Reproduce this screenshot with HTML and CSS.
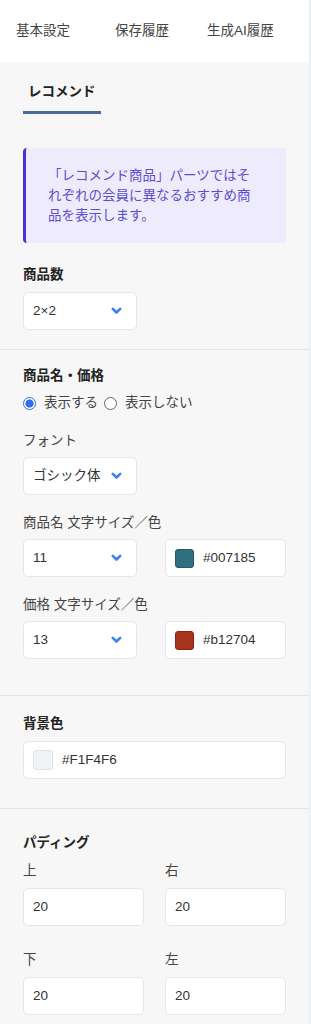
FILE: index.html
```html
<!DOCTYPE html>
<html>
<head>
    <title>レコメンド設定</title>
    <link rel="stylesheet" href="styles.css">
</head>
<body>
    <div class="panel">
        <div class="top-tabs">
            <span class="top-tab">基本設定</span>
            <span class="top-tab">保存履歴</span>
            <span class="top-tab">生成AI履歴</span>
        </div>

        <div class="sub-tabs">
            <span class="sub-tab active">レコメンド</span>
        </div>

        <div class="section section-first">
            <div class="info-box">「レコメンド商品」パーツではそれぞれの会員に異なるおすすめ商品を表示します。</div>

            <div class="field-label bold">商品数</div>
            <div class="select">
                <span>2×2</span>
                <svg class="chevron" width="11" height="8" viewBox="0 0 11 8"><path d="M1.8 1.8 L5.5 5.5 L9.2 1.8" fill="none" stroke="#3b82f6" stroke-width="2.6" stroke-linecap="round" stroke-linejoin="round"/></svg>
            </div>
        </div>

        <div class="section section-name">
            <div class="field-label bold">商品名・価格</div>
            <div class="radio-row">
                <label class="radio"><span class="radio-dot checked"></span>表示する</label>
                <label class="radio"><span class="radio-dot"></span>表示しない</label>
            </div>

            <div class="field-label spaced">フォント</div>
            <div class="select">
                <span>ゴシック体</span>
                <svg class="chevron" width="11" height="8" viewBox="0 0 11 8"><path d="M1.8 1.8 L5.5 5.5 L9.2 1.8" fill="none" stroke="#3b82f6" stroke-width="2.6" stroke-linecap="round" stroke-linejoin="round"/></svg>
            </div>

            <div class="field-label spaced">商品名 文字サイズ／色</div>
            <div class="size-color-row">
                <div class="select">
                    <span>11</span>
                    <svg class="chevron" width="11" height="8" viewBox="0 0 11 8"><path d="M1.8 1.8 L5.5 5.5 L9.2 1.8" fill="none" stroke="#3b82f6" stroke-width="2.6" stroke-linecap="round" stroke-linejoin="round"/></svg>
                </div>
                <div class="color-input">
                    <span class="swatch swatch-teal"></span>
                    <span>#007185</span>
                </div>
            </div>

            <div class="field-label spaced">価格 文字サイズ／色</div>
            <div class="size-color-row">
                <div class="select">
                    <span>13</span>
                    <svg class="chevron" width="11" height="8" viewBox="0 0 11 8"><path d="M1.8 1.8 L5.5 5.5 L9.2 1.8" fill="none" stroke="#3b82f6" stroke-width="2.6" stroke-linecap="round" stroke-linejoin="round"/></svg>
                </div>
                <div class="color-input">
                    <span class="swatch swatch-red"></span>
                    <span>#b12704</span>
                </div>
            </div>
        </div>

        <div class="section section-bg">
            <div class="field-label bold">背景色</div>
            <div class="color-input">
                <span class="swatch swatch-light"></span>
                <span>#F1F4F6</span>
            </div>
        </div>

        <div class="section section-padding">
            <div class="field-label bold">パディング</div>
            <div class="padding-grid">
                <div>
                    <div class="field-label small-gap">上</div>
                    <div class="text-input">20</div>
                </div>
                <div>
                    <div class="field-label small-gap">右</div>
                    <div class="text-input">20</div>
                </div>
                <div>
                    <div class="field-label small-gap">下</div>
                    <div class="text-input">20</div>
                </div>
                <div>
                    <div class="field-label small-gap">左</div>
                    <div class="text-input">20</div>
                </div>
            </div>
        </div>
    </div>
</body>
</html>
```

FILE: styles.css
```css
html {
    background: #eaf0fa;
}

body {
    margin: 0;
    font-family: "Liberation Sans", "Noto Sans CJK JP", sans-serif;
    font-size: 13.5px;
    line-height: 20px;
    color: #333;
}

.panel {
    width: 309px;
    background: #f7f7f7;
    padding-bottom: 40px;
}

.top-tabs {
    height: 62px;
    background: white;
    display: flex;
    align-items: center;
    padding-left: 16px;
}

.top-tab {
    color: #444;
    white-space: nowrap;
}

.top-tab:nth-child(1) {
    margin-right: 45px;
}

.top-tab:nth-child(2) {
    margin-right: 38px;
}

.sub-tabs {
    padding: 20px 23px 0;
    display: flex;
}

.sub-tab {
    font-weight: bold;
    color: #222;
    padding: 0 5px 9px;
    border-bottom: 3px solid #4b6a9b;
}

.section {
    padding: 0 23px;
    border-bottom: 1px solid #e4e4e4;
}

.section-first {
    padding-top: 34px;
    padding-bottom: 19px;
}

.section-name {
    padding-top: 16px;
    padding-bottom: 36px;
}

.section-bg {
    padding-top: 18px;
    padding-bottom: 29px;
}

.section-padding {
    padding-top: 24px;
    border-bottom: none;
}

.info-box {
    background: #eeebfc;
    border-left: 3px solid #4c2fd6;
    border-radius: 4px;
    color: #5b4fd0;
    padding: 18px 28px 17px 22px;
    margin-bottom: 22px;
}

.field-label {
    color: #444;
    margin-bottom: 7px;
}

.field-label.bold {
    font-weight: bold;
    color: #222;
}

.field-label.spaced {
    margin-top: 18px;
    margin-bottom: 6px;
}

.field-label.small-gap {
    margin-top: 1px;
    margin-bottom: 7px;
}

.select,
.color-input,
.text-input {
    box-sizing: border-box;
    height: 38px;
    background: white;
    border: 1px solid #e6e6e6;
    border-radius: 5px;
    display: flex;
    align-items: center;
    color: #333;
}

.select {
    width: 114px;
    padding: 0 14px 0 9px;
    justify-content: space-between;
}

.chevron {
    display: block;
}

.radio-row {
    display: flex;
    align-items: center;
    gap: 6px;
}

.radio {
    display: flex;
    align-items: center;
    gap: 8px;
    color: #444;
}

.radio-dot {
    box-sizing: border-box;
    width: 13px;
    height: 13px;
    border-radius: 50%;
    border: 1px solid #666;
    background: white;
}

.radio-dot.checked {
    border: 1.5px solid #2f6fed;
    background: radial-gradient(circle, #2f6fed 0 3.8px, white 4.4px);
}

.size-color-row {
    display: grid;
    grid-template-columns: 114px 1fr;
    gap: 28px;
}

.color-input {
    padding-left: 9px;
    gap: 9px;
}

.swatch {
    box-sizing: border-box;
    width: 19px;
    height: 19px;
    border-radius: 3px;
}

.swatch-teal {
    background: #2e6f80;
    border: 1px solid #24596a;
}

.swatch-red {
    background: #a8341f;
    border: 1px solid #8a2410;
}

.swatch-light {
    width: 20px;
    height: 20px;
    background: #f1f4f6;
    border: 1px solid #e0e3e6;
}

.padding-grid {
    display: grid;
    grid-template-columns: 1fr 1fr;
    column-gap: 21px;
    row-gap: 23px;
}

.text-input {
    padding-left: 9px;
}
```
